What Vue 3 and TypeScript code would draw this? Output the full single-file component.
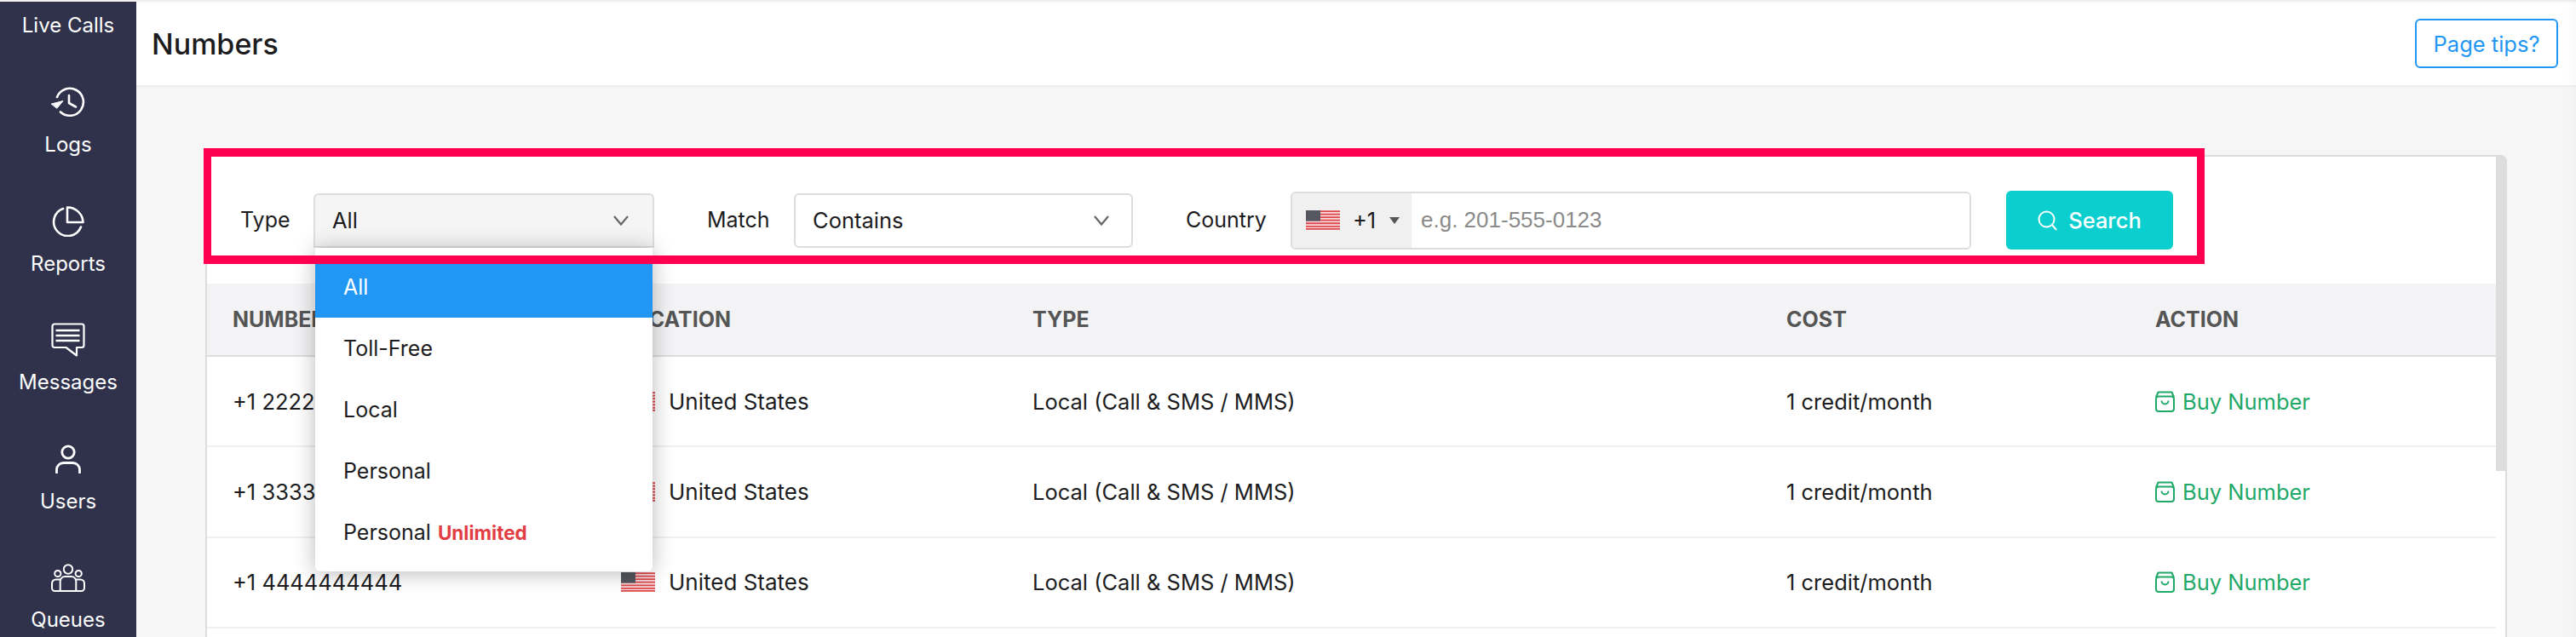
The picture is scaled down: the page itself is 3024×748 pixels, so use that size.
<template>
  <div class="app">
    <aside class="sidebar">
      <div class="nav-live">Live Calls</div>
      <a v-for="item in navItems" :key="item.label" class="nav-item">
        <span class="nav-icon">
          <svg v-if="item.icon === 'logs'" width="40" height="36" viewBox="0 0 40 36" fill="none" stroke="#fff" stroke-width="2.6" stroke-linecap="round" stroke-linejoin="round">
            <path d="M7 12A16 16 0 1 1 11 29.5" />
            <path d="M0.5 20L14 16.5L7 25Z" fill="#fff" stroke-width="1" />
            <path d="M21 10v9l8 4.5" />
          </svg>
          <svg v-else-if="item.icon === 'reports'" width="38" height="36" viewBox="0 0 38 36" fill="none" stroke="#fff" stroke-width="2.6" stroke-linecap="round" stroke-linejoin="round">
            <path d="M13 3A16.5 16.5 0 1 0 34 24.500" />
            <path d="M18 1.500A18.500 18 0 0 1 36.500 19H18Z" />
          </svg>
          <svg v-else-if="item.icon === 'messages'" width="40" height="40" viewBox="0 0 40 40" fill="none" stroke="#fff" stroke-width="2.2" stroke-linejoin="round">
            <path d="M4 1.500H36A2.500 2.500 0 0 1 38.500 4V26.500A2.500 2.500 0 0 1 36 29H30V38.500L17.500 29H4A2.500 2.500 0 0 1 1.500 26.500V4A2.500 2.500 0 0 1 4 1.500Z" />
            <path d="M5.500 9H33.500M5.500 15H33.500M5.500 21H33.500" stroke-width="2.400" />
          </svg>
          <svg v-else-if="item.icon === 'users'" width="30" height="34" viewBox="0 0 30 34" fill="none" stroke="#fff" stroke-width="2.800" stroke-linecap="round">
            <circle cx="15" cy="9" r="7.200" />
            <path d="M1.500 33V29A8 8 0 0 1 9.500 21.500H20.500A8 8 0 0 1 28.500 29V33" />
          </svg>
          <svg v-else width="40" height="33" viewBox="0 0 40 33" fill="none" stroke="#fff" stroke-width="2" stroke-linejoin="round">
            <circle cx="20" cy="6.500" r="5.200" />
            <circle cx="7.800" cy="11.500" r="3.600" />
            <circle cx="32.200" cy="11.500" r="3.600" />
            <path d="M10.700 32H4.500A3.500 3.500 0 0 1 1 28.500V23A4.500 4.500 0 0 1 5.500 18.500H11" />
            <path d="M29.300 32H35.500A3.500 3.500 0 0 0 39 28.500V23A4.500 4.500 0 0 0 34.500 18.500H29" />
            <path d="M10.700 32V20.500A5.500 5.500 0 0 1 16.200 15H23.800A5.500 5.500 0 0 1 29.300 20.500V32Z" />
          </svg>
        </span>
        <span class="nav-label">{{ item.label }}</span>
      </a>
    </aside>

    <main class="main">
      <header class="topbar">
        <h1 class="title">Numbers</h1>
        <button class="tips-btn">Page tips?</button>
      </header>

      <div class="content">
        <section class="card">
          <div class="filters">
            <label class="filter-label filter-label--type">Type</label>
            <div class="select select--open">
              <span>All</span>
              <svg class="chevron" width="18" height="12" viewBox="0 0 18 12" fill="none" stroke="#666" stroke-width="2.200">
                <path d="M1 1l8 9.500L17 1" />
              </svg>
              <ul class="dropdown">
                <li
                  v-for="opt in typeOptions"
                  :key="opt.label + opt.tag"
                  class="dropdown-item"
                  :class="{ 'is-active': opt.label === 'All' }"
                >
                  {{ opt.label }}<b v-if="opt.tag" class="tag">{{ opt.tag }}</b>
                </li>
              </ul>
            </div>

            <label class="filter-label filter-label--match">Match</label>
            <div class="select select--match">
              <span>Contains</span>
              <svg class="chevron" width="18" height="12" viewBox="0 0 18 12" fill="none" stroke="#666" stroke-width="2.200">
                <path d="M1 1l8 9.500L17 1" />
              </svg>
            </div>

            <label class="filter-label filter-label--country">Country</label>
            <div class="phone">
              <div class="phone-prefix">
                <svg class="flag" width="40" height="23" viewBox="0 0 40 22" preserveAspectRatio="none">
                  <rect width="40" height="22" fill="#f6dede" />
                  <path v-for="y in flagStripes" :key="y" :d="`M0 ${y}h40`" stroke="#e0474c" stroke-width="1.700" />
                  <rect width="17" height="12" fill="#55565f" />
                </svg>
                <span class="dial">+1</span>
                <span class="caret"></span>
              </div>
              <input class="phone-input" type="text" placeholder="e.g. 201-555-0123" />
            </div>

            <button class="search-btn">
              <svg width="24" height="24" viewBox="0 0 24 24" fill="none" stroke="#fff" stroke-width="2">
                <circle cx="10.500" cy="10.500" r="9" />
                <path d="M17 17l5 6" />
              </svg>
              Search
            </button>
          </div>

          <div class="table">
            <div class="row row--head">
              <div v-for="col in columns" :key="col" class="cell">{{ col }}</div>
            </div>
            <div v-for="row in rows" :key="row.number" class="row">
              <div class="cell">{{ row.number }}</div>
              <div class="cell cell--location">
                <svg class="flag" width="40" height="23" viewBox="0 0 40 22" preserveAspectRatio="none">
                  <rect width="40" height="22" fill="#f6dede" />
                  <path v-for="y in flagStripes" :key="y" :d="`M0 ${y}h40`" stroke="#e0474c" stroke-width="1.700" />
                  <rect width="17" height="12" fill="#55565f" />
                </svg>
                {{ row.location }}
              </div>
              <div class="cell">{{ row.type }}</div>
              <div class="cell">{{ row.cost }}</div>
              <a class="cell cell--action">
                <svg width="23" height="25" viewBox="0 0 23 25" fill="none" stroke="#1fa968" stroke-width="2" stroke-linejoin="round">
                  <path d="M1 7.500L3.500 1.500H19.500L22 7.500" />
                  <rect x="1" y="6.500" width="21" height="17.500" rx="3" />
                  <path d="M7.500 11.500a4 4 0 0 0 8 0" />
                </svg>
                Buy Number
              </a>
            </div>
          </div>

          <div class="scroll-thumb"></div>
        </section>
      </div>
    </main>

    <!-- annotation drawn on the screenshot -->
    <div class="highlight"></div>
  </div>
</template>

<script setup lang="ts">
interface NavItem {
  label: string;
  icon: string;
}

const navItems: NavItem[] = [
  { label: 'Logs', icon: 'logs' },
  { label: 'Reports', icon: 'reports' },
  { label: 'Messages', icon: 'messages' },
  { label: 'Users', icon: 'users' },
  { label: 'Queues', icon: 'queues' },
];

const typeOptions = [
  { label: 'All', tag: '' },
  { label: 'Toll-Free', tag: '' },
  { label: 'Local', tag: '' },
  { label: 'Personal', tag: '' },
  { label: 'Personal', tag: 'Unlimited' },
];

const columns = ['NUMBER', 'LOCATION', 'TYPE', 'COST', 'ACTION'];

const flagStripes = [1, 4.400, 7.800, 11.200, 14.600, 18, 21];

const rows = ['2222222222', '3333333333', '4444444444'].map((n) => ({
  number: `+1 ${n}`,
  location: 'United States',
  type: 'Local (Call & SMS / MMS)',
  cost: '1 credit/month',
}));
</script>

<style scoped>
.app {
  position: relative;
  display: flex;
  height: 748px;
  overflow: hidden;
  padding-top: 2px;
  box-sizing: border-box;
  background: #f0f0f0;
  font-family: Inter, "Liberation Sans", sans-serif;
  font-size: 25.5px;
  color: #1c1c1e;
}

/* faint edge shade down the right of the window */
.app::after {
  content: '';
  position: absolute;
  top: 0;
  right: 0;
  bottom: 0;
  width: 12px;
  background: linear-gradient(to right, rgba(0, 0, 0, 0), rgba(0, 0, 0, 0.02));
}

.sidebar {
  flex: 0 0 160px;
  background: #30324c;
  color: #fff;
  display: flex;
  flex-direction: column;
  align-items: stretch;
  overflow: hidden;
  font-size: 24px;
  font-weight: 400;
  text-align: center;
}

.nav-live {
  height: 48px;
  line-height: 56px;
  flex: none;
}

.nav-item {
  flex: 0 0 139.6px;
  display: flex;
  flex-direction: column;
  align-items: center;
}

.nav-icon {
  height: 60px;
  margin-top: 40px;
  display: flex;
  align-items: center;
  justify-content: center;
}

.nav-label {
  margin-top: 3px;
  line-height: 34px;
}

.main {
  flex: 1;
  min-width: 0;
  display: flex;
  flex-direction: column;
  background: #f6f6f6;
}

.topbar {
  flex: 0 0 100px;
  box-sizing: border-box;
  display: flex;
  align-items: center;
  justify-content: space-between;
  padding: 0 21px 0 18px;
  background: #fff;
  border-bottom: 2px solid #eeeeee;
  box-shadow: inset 0 4px 4px -3px rgba(0, 0, 0, 0.04);
}

.title {
  margin: 0;
  font-size: 34px;
  font-weight: 500;
}

.tips-btn {
  width: 168px;
  height: 58px;
  padding: 0;
  background: #fff;
  border: 2px solid #2196f3;
  border-radius: 6px;
  color: #2196f3;
  font: inherit;
  font-size: 25.5px;
}

.content {
  flex: 1;
  min-height: 0;
  display: flex;
  padding: 80px 81px 0;
}

.card {
  position: relative;
  flex: 1;
  min-width: 0;
  box-sizing: border-box;
  background: #fff;
  border: 2px solid #ddd;
  border-bottom: 0;
  border-radius: 6px 8px 0 0;
  padding-right: 11px;
}

.filters {
  height: 149px;
  box-sizing: border-box;
  display: flex;
  align-items: center;
  padding-left: 39px;
}

.filter-label {
  flex: none;
  box-sizing: border-box;
  font-size: 25px;
  padding-bottom: 2px;
}

.filter-label--type {
  width: 86px;
}

.filter-label--match {
  width: 102px;
  margin-left: 62px;
}

.filter-label--country {
  width: 123px;
  margin-left: 62px;
}

.select {
  position: relative;
  flex: none;
  box-sizing: border-box;
  width: 398px;
  height: 64px;
  display: flex;
  align-items: center;
  justify-content: space-between;
  padding: 0 26px 0 20px;
  background: #fff;
  border: 2px solid #ddd;
  border-radius: 6px;
}

.select--open {
  width: 400px;
  padding-right: 28px;
  background: #f5f5f5;
  border-radius: 6px 6px 0 0;
}

.chevron {
  flex: none;
}

.dropdown {
  position: absolute;
  top: calc(100% + 2px);
  left: 0;
  z-index: 5;
  width: 396px;
  margin: 0;
  padding: 10px 0;
  list-style: none;
  background: #fff;
  border-radius: 0 0 6px 6px;
  box-shadow: 0 2px 26px rgba(0, 0, 0, 0.28);
  font-size: 25px;
}

.dropdown-item {
  height: 72px;
  line-height: 72px;
  padding-left: 33px;
}

.dropdown-item.is-active {
  background: #2196f3;
  color: #fff;
}

.tag {
  margin-left: 8px;
  color: #e23d42;
  font-size: 22.5px;
  font-weight: 700;
}

.phone {
  flex: none;
  box-sizing: border-box;
  width: 799px;
  height: 68px;
  display: flex;
  border: 2px solid #ddd;
  border-radius: 6px;
  overflow: hidden;
}

.phone-prefix {
  flex: 0 0 140px;
  box-sizing: border-box;
  display: flex;
  align-items: center;
  padding-left: 16px;
  background: #f0f0f0;
}

.dial {
  margin-left: 15px;
}

.caret {
  margin-left: 16px;
  width: 0;
  height: 0;
  border-left: 6px solid transparent;
  border-right: 6px solid transparent;
  border-top: 8px solid #555;
}

.phone-input {
  flex: 1;
  min-width: 0;
  padding: 0 11px;
  border: 0;
  outline: 0;
  background: #fff;
  font-family: "Liberation Sans", Arial, sans-serif;
  font-size: 26px;
  color: inherit;
}

.phone-input::placeholder {
  color: #8a8a8a;
  opacity: 1;
}

.search-btn {
  flex: none;
  box-sizing: border-box;
  width: 196px;
  height: 69px;
  margin-left: 41px;
  display: flex;
  align-items: center;
  justify-content: center;
  gap: 12px;
  border: 0;
  border-radius: 6px;
  background: #0bcfcf;
  color: #fff;
  font: inherit;
  font-weight: 500;
}

.table {
  width: 2687px;
}

.row {
  display: grid;
  grid-template-columns: 456px 483px 885px 433px 430px;
  height: 106.33px;
  box-sizing: border-box;
  border-bottom: 2px solid #f0f0f0;
}

.row--head {
  height: 86px;
  background: #f3f3f5;
  border-bottom-color: #ddd;
  color: #555;
  font-size: 25px;
  font-weight: 700;
}

.cell {
  display: flex;
  align-items: center;
  padding-left: 30px;
}

.cell--location {
  gap: 16px;
  font-size: 26px;
}

.cell--action {
  gap: 9px;
  color: #1fa968;
}

.scroll-thumb {
  position: absolute;
  top: -2px;
  right: -2px;
  width: 13px;
  height: 371px;
  background: #ddd;
  border-top-right-radius: 8px;
}

.highlight {
  position: absolute;
  z-index: 10;
  left: 239px;
  top: 174px;
  width: 2349px;
  height: 136px;
  box-sizing: border-box;
  border: solid #ff0050;
  border-width: 10px 9px;
  pointer-events: none;
}
</style>

<style>
html,
body {
  margin: 0;
  overflow: hidden;
}
</style>
